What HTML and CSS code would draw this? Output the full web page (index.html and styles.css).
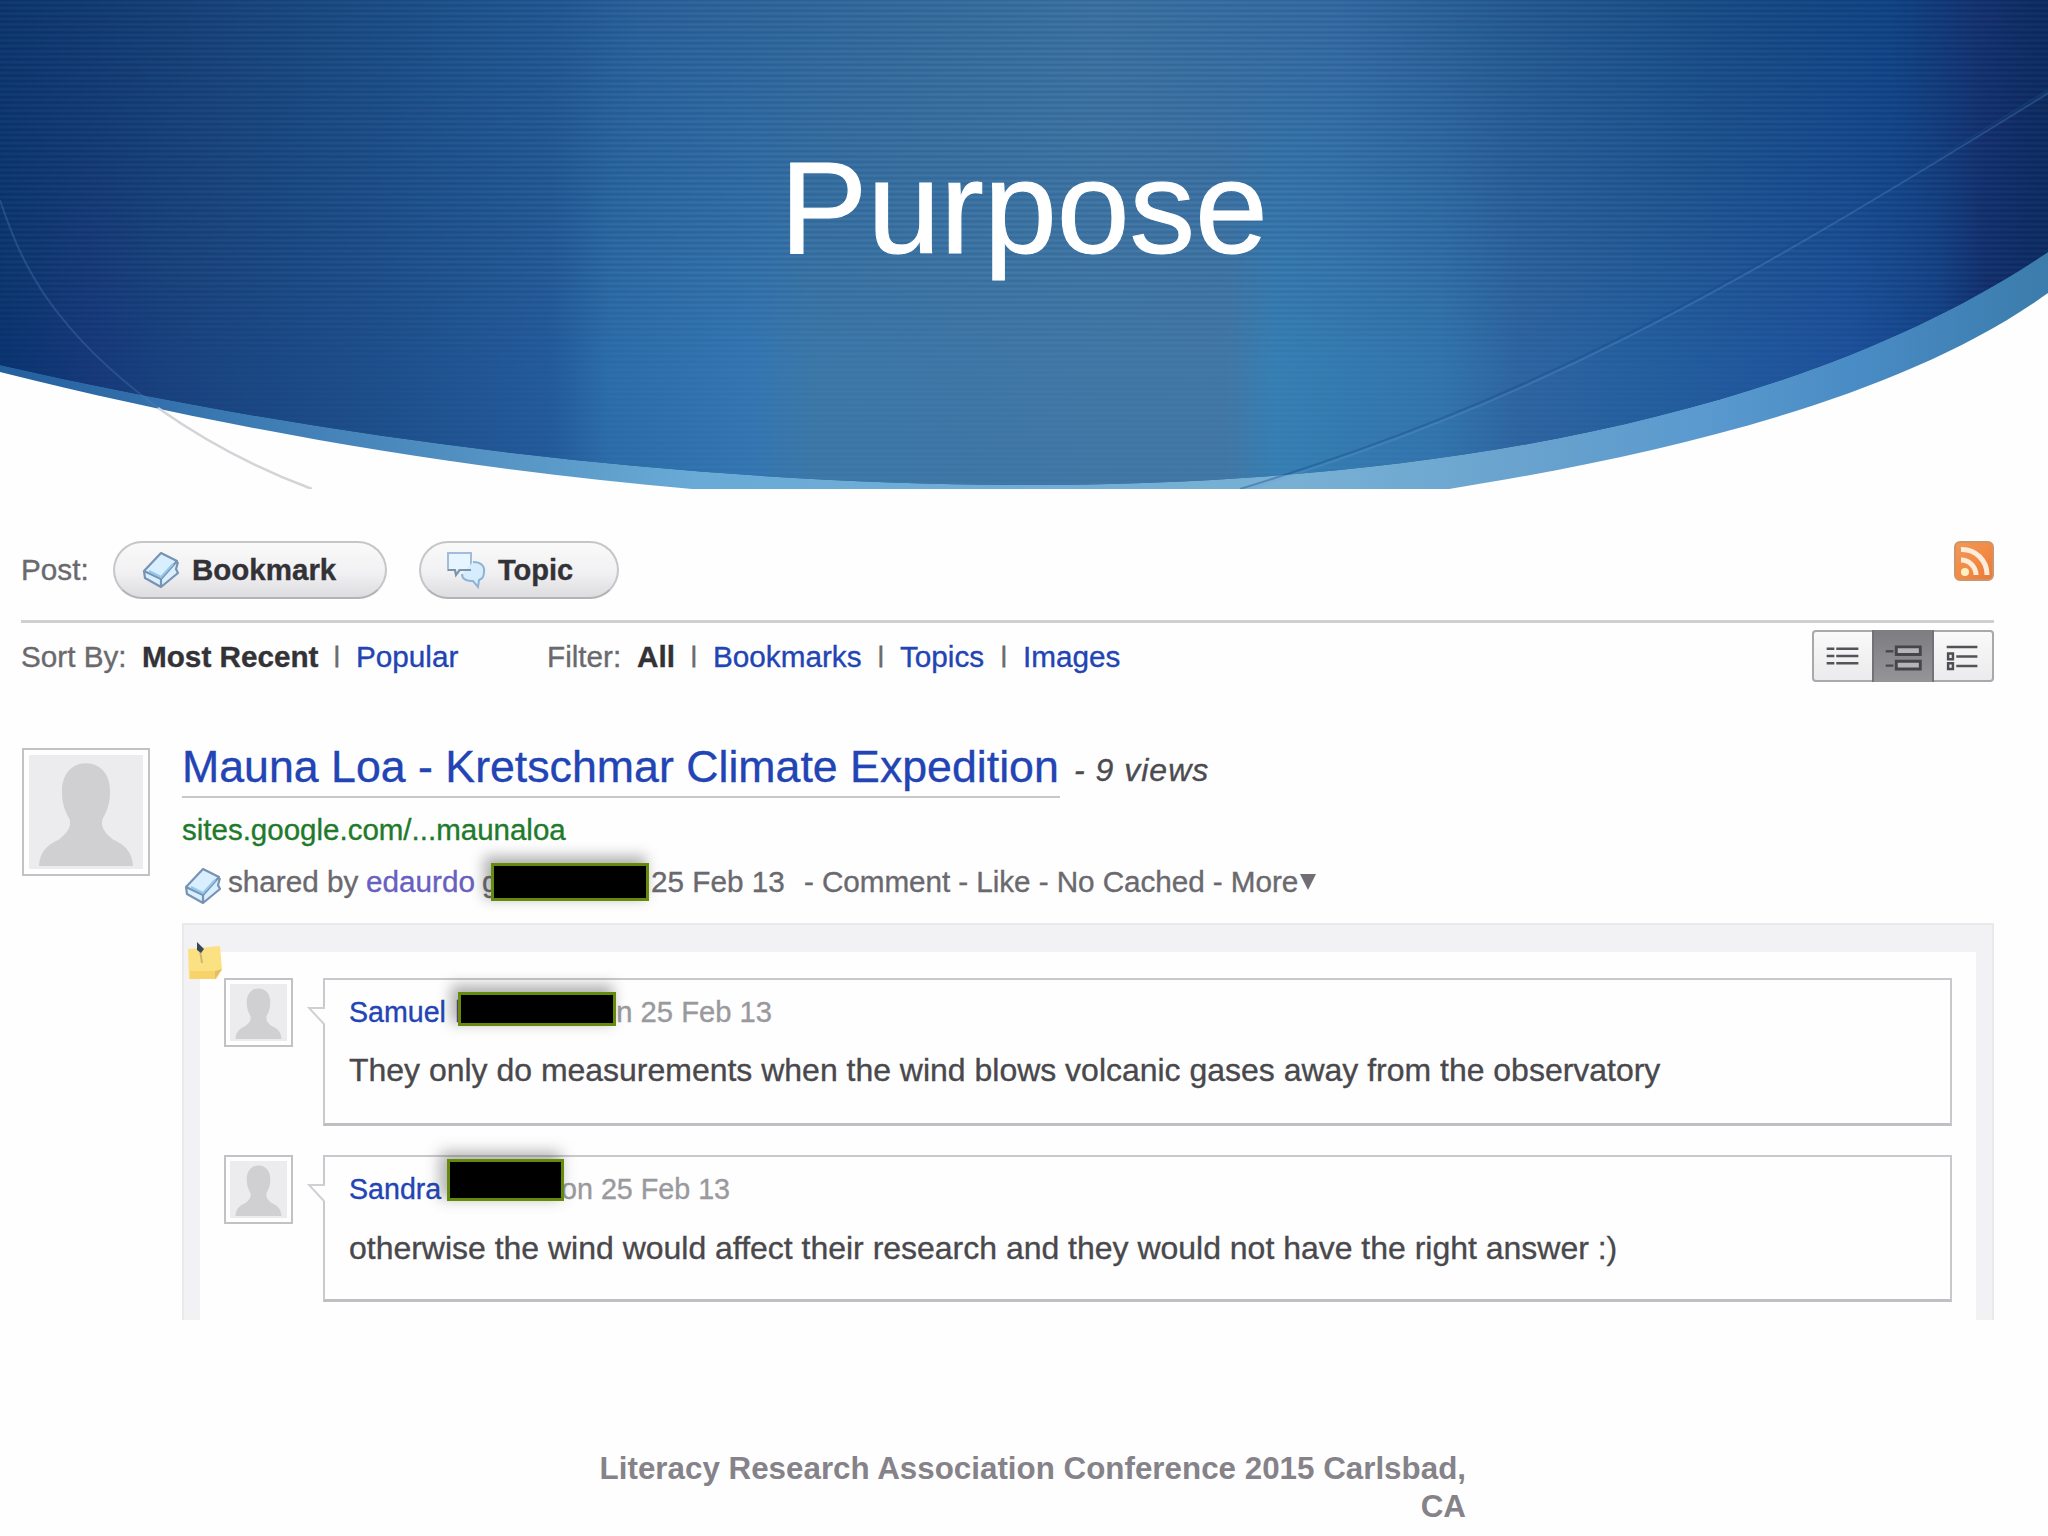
FILE: index.html
```html
<!DOCTYPE html>
<html lang="en">
<head>
<meta charset="utf-8">
<title>Purpose</title>
<link rel="stylesheet" href="styles.css">
</head>
<body>
<svg class="defs" width="0" height="0">
  <symbol id="person" viewBox="0 0 100 100" preserveAspectRatio="none">
    <path d="M50 3C66 3 76 15 75 31C75 42 71 50 67 56C65 64 70 69 78 75C90 80 98 86 99 100H1C2 86 10 80 22 75C30 69 35 64 33 56C29 50 25 42 25 31C24 15 34 3 50 3Z" fill="#d0cfd1"/>
  </symbol>
  <symbol id="book" viewBox="0 0 38 38">
    <path d="M2 20L20 2L36 10L35 17L36 22L19 36L2 27Z" fill="#d9efff"/>
    <path d="M2 20L19 2L35 10L19 28ZM2 20L3 27L19 36L36 22L34 18L36 11M19 28V35" fill="none" stroke="#7793b3" stroke-width="2.2" stroke-linejoin="round"/>
    <path d="M7 20L19 26L31 13" fill="none" stroke="#94c7ec" stroke-width="2"/>
  </symbol>
</svg>
<div class="slide">
  <header class="hero">
    <svg class="mask" width="0" height="0"><clipPath id="dome"><path d="M0 0H2048V252C1830 400 1480 485 1024 485C690 484 330 440 0 365Z"/></clipPath>
    <clipPath id="rim"><path d="M0 0H2048V293C1900 400 1660 455 1449 489H692C470 470 240 432 0 372Z"/></clipPath></svg>
    <div class="rim"></div>
    <div class="dome"><div class="low"></div><div class="stripes"></div></div>
    <svg class="arcs" viewBox="0 0 2048 489" fill="none">
      <path d="M0 200C15 245 28 270 46 297C75 338 108 370 158 408" stroke="#5b86bd" stroke-opacity=".3" stroke-width="2"/>
      <path d="M158 408C205 441 255 468 312 489" stroke="#d4d3d8" stroke-width="2.5"/>
      <path d="M1240 489C1530 400 1710 300 2048 90" stroke="#174c86" stroke-opacity=".4" stroke-width="2"/>
      <path d="M1242 491C1532 402 1712 302 2050 92" stroke="#6aa0d6" stroke-opacity=".25" stroke-width="2"/>
    </svg>
    <h1>Purpose</h1>
  </header>
  <main>
    <div class="post">
      <span class="label">Post:</span>
      <div class="pill bookmark"><svg class="ic"><use href="#book"/></svg><b>Bookmark</b></div>
      <div class="pill topic"><svg class="ic" viewBox="0 0 40 40"><path d="M2 3H25V20H13L10 25L9 20H2Z" fill="#e6f5ff" stroke="#a3bdd8" stroke-width="2"/><path d="M27 12C35 12 39 16 38 22C38 27 36 29 33 30L32 37L27 31C19 31 16 28 16 24" fill="#d5edfc" stroke="#8fb3d5" stroke-width="2"/><path d="M2 20H9L10 25L14 20H25" fill="none" stroke="#7d93ab" stroke-width="2"/></svg><b>Topic</b></div>
      <svg class="rss" viewBox="0 0 40 40"><defs><linearGradient id="o" x1="0" y1="0" x2="1" y2="1"><stop offset="0" stop-color="#ee9a5a"/><stop offset=".5" stop-color="#f28b45"/><stop offset="1" stop-color="#e8793a"/></linearGradient></defs><rect x="1" y="1" width="38" height="38" rx="5" fill="url(#o)" stroke="#cf9468" stroke-width="2"/><circle cx="11" cy="31" r="4" fill="#fff0c4"/><path d="M7 19A15 15 0 0 1 22 34M7 8.500A25 25 0 0 1 33 34" fill="none" stroke="#fdebdc" stroke-width="5"/></svg>
    </div>
    <div class="tools">
      <span class="w-sort">Sort By:</span><b class="w-recent">Most Recent</b><i class="bar">|</i><a class="w-pop">Popular</a><span class="w-filter">Filter:</span><b class="w-all">All</b><i class="bar">|</i><a class="w-books">Bookmarks</a><i class="bar">|</i><a class="w-topics">Topics</a><i class="bar">|</i><a>Images</a>
      <div class="views">
        <div><svg viewBox="0 0 60 50"><path d="M13 17.500H21M23 17.500H46M13 25H21M23 25H46M13 32.500H21M23 32.500H46" stroke="#55535a" stroke-width="2.600"/></svg></div>
        <div class="on"><svg viewBox="0 0 60 50"><path d="M12 20H20M12 35H20" stroke="#4b4a4e" stroke-width="2.500"/><path d="M23 15.500H48V23.500H23ZM23 30.500H48V38.500H23Z" fill="#b5b4b7" stroke="#464549" stroke-width="3"/></svg></div>
        <div><svg viewBox="0 0 60 50"><path d="M13 15.500H45M23 25.500H45M23 35.500H45" stroke="#55535a" stroke-width="2.600"/><path d="M14.500 22.500H19.500V28.500H14.500ZM14.500 32.500H19.500V38.500H14.500Z" fill="none" stroke="#4f4e52" stroke-width="2.600"/></svg></div>
      </div>
    </div>
    <article class="item">
      <div class="avatar"><svg><use href="#person"/></svg></div>
      <div class="body">
        <div class="title"><a>Mauna Loa - Kretschmar Climate Expedition</a><em>- 9 views</em></div>
        <div class="url">sites.google.com/...maunaloa</div>
        <div class="meta"><svg class="ic"><use href="#book"/></svg><span class="w-shared">shared by</span><a class="w-who">edaurdo</a><span class="w-g">g</span><span class="w-date">25 Feb 13</span><span class="acts">- Comment - Like - No Cached - More</span><svg class="tri" viewBox="0 0 18 18"><path d="M1 1H17L9 17Z" fill="#716f75"/></svg><div class="redact r1"></div></div>
        <section class="thread">
          <svg class="note" viewBox="0 0 36 40"><path d="M1 8L33 5L35 29L29 38L2 38Z" fill="#fbe181"/><path d="M3 30H33L29 38H3Z" fill="#f7d36c"/><path d="M35 28L28 30V38Z" fill="#e5bd62"/><path d="M13 9L15 22" stroke="#c8b87c" stroke-width="2"/><path d="M10 1L17 8L14 12L10 9Z" fill="#38465a"/></svg>
          <div class="comment">
            <div class="avatar"><svg><use href="#person"/></svg></div>
            <div class="bubble">
              <svg class="tail" viewBox="0 0 18 18"><path d="M1 1H18V17Z" fill="#fefefe"/><path d="M18 1H2L17 17" fill="none" stroke="#d0cfd3" stroke-width="2"/></svg>
              <div class="by"><a class="w-sam">Samuel</a><span class="w-l">l</span><span class="when">on 25 Feb 13</span><div class="redact r2"></div></div>
              <p>They only do measurements when the wind blows volcanic gases away from the observatory</p>
            </div>
          </div>
          <div class="comment">
            <div class="avatar"><svg><use href="#person"/></svg></div>
            <div class="bubble">
              <svg class="tail" viewBox="0 0 18 18"><path d="M1 1H18V17Z" fill="#fefefe"/><path d="M18 1H2L17 17" fill="none" stroke="#d0cfd3" stroke-width="2"/></svg>
              <div class="by"><a class="w-san">Sandra</a><span class="when">on 25 Feb 13</span><div class="redact r3"></div></div>
              <p>otherwise the wind would affect their research and they would not have the right answer :)</p>
            </div>
          </div>
        </section>
      </div>
    </article>
  </main>
  <footer>Literacy Research Association Conference 2015 Carlsbad,<br>CA</footer>
</div>
</body>
</html>
```
FILE: styles.css
```css
* { box-sizing: border-box; }
body { margin: 0; background: #fefefe; font-family: "Liberation Sans", Arial, sans-serif; }
svg { display: block; flex: none; }
.defs, .mask { position: absolute; }
.slide { width: 2048px; height: 1536px; overflow: hidden; background: #fefefe; }

.hero { position: relative; height: 489px; }
.rim, .dome, .low, .stripes, .arcs { position: absolute; inset: 0; }
.arcs { width: 2048px; height: 489px; }
.rim {
  clip-path: url(#rim);
  background: linear-gradient(90deg, #245f9e 0, #3c7ab3 240px, #5796c5 520px, #69abd6 700px, #78b0d4 1300px, #67a1cd 1550px, #5a9acf 1700px, #498bc4 1860px, #3b7cac 2048px);
}
.dome {
  clip-path: url(#dome);
  background: linear-gradient(90deg, #0b356d 0, #143f77 180px, #184a83 340px, #205893 560px, #28619b 640px, #326c9e 900px, #3a72a3 1100px, #326aa3 1340px, #245b93 1500px, #174c86 1700px, #0e4284 1890px, #122e6c 1990px, #0a295e 2048px);
}
.low {
  background: linear-gradient(90deg, #09346f 0, #16387a 90px, #18427e 170px, #1d4f8c 380px, #235b9b 550px, #2c6eaa 610px, #3477b3 755px, #3c78a9 810px, #4278a6 1225px, #3680b5 1275px, #3275ae 1440px, #2e65a2 1520px, #245f9f 1650px, #1d519c 1850px, #144387 1940px, #102e6c 1985px, #0b2a63 2048px);
  -webkit-mask-image: linear-gradient(180deg, transparent 0, rgba(0, 0, 0, .4) 35%, #000 75%);
  mask-image: linear-gradient(180deg, transparent 0, rgba(0, 0, 0, .4) 35%, #000 75%);
}
.stripes {
  background: repeating-linear-gradient(180deg, rgba(0, 20, 60, .1) 0, rgba(255, 255, 255, .04) 2.700px, rgba(0, 20, 60, .1) 5.400px);
  -webkit-mask-image: linear-gradient(180deg, #000 55%, rgba(0, 0, 0, .3) 75%);
  mask-image: linear-gradient(180deg, #000 55%, rgba(0, 0, 0, .3) 75%);
}
h1 { position: relative; margin: 0; padding-top: 133px; text-align: center; color: #fff; font-weight: 400; font-size: 131px; line-height: 150px; -webkit-text-stroke: 1px #fff; }

main { padding: 52px 54px 0 21px; font-size: 29.700px; line-height: 40px; color: #6a696e; white-space: nowrap; -webkit-text-stroke: .35px; }
a { color: #2244b4; }
b { color: #333236; }
.ic { width: 38px; height: 38px; }

.post { display: flex; align-items: flex-start; height: 79px; }
.label { width: 92px; padding-top: 9px; }
.pill { display: flex; align-items: center; height: 58px; border: 2px solid #c6c5c8; border-bottom-color: #b3b2b5; border-radius: 29px; background: linear-gradient(#fafafa, #f1f0f2 55%, #dddcde); }
.bookmark { width: 274px; margin-right: 32px; padding-left: 27px; font-size: 29.500px; }
.bookmark .ic { margin-right: 12px; }
.topic { width: 200px; padding-left: 25px; font-size: 29px; }
.topic .ic { width: 40px; height: 40px; margin-right: 12px; }
.rss { width: 40px; height: 40px; margin-left: auto; }

.tools { display: flex; height: 128px; border-top: 3px solid #d0cfd1; padding-top: 7px; }
.tools > span, .tools > b, .tools > a { padding-top: 7px; flex: none; }
.bar { width: 22px; flex: none; padding-top: 5px; font-style: normal; font-size: 22px; color: #6a696e; -webkit-text-stroke: 1px; }
.w-sort { width: 121px; }
.w-recent { width: 192px; }
.w-pop { width: 191px; }
.w-filter { width: 90px; }
.w-all { width: 54px; }
.w-books { width: 165px; }
.w-topics { width: 101px; }
.views { display: flex; width: 182px; height: 52px; margin-left: auto; border: 2px solid #a9a8ab; border-radius: 4px; background: linear-gradient(#fafafa, #ebeaec); }
.views div { flex: 1; }
.views svg { width: 100%; height: 48px; }
.views .on { margin: -2px 0; padding: 2px 0; background: linear-gradient(#7d7c80, #959497); border: solid #737276; border-width: 0 2px; }

.item { display: flex; }
.avatar { flex: none; width: 128px; height: 128px; padding: 5px; border: 2px solid #c2c1c4; background: #ecebed; background-clip: content-box; }
.item > .avatar { margin-left: 1px; }
.avatar svg { width: 100%; height: 100%; padding: 5px 9px 3px; }
.body { width: 1812px; margin-left: 32px; }
.title { display: flex; height: 50px; font-size: 44.700px; }
.title a { width: 878px; margin-right: 14px; border-bottom: 2px solid #c4c8ca; margin-top: -6px; height: 56px; line-height: 50px; }
.title em { font-size: 32px; line-height: 44px; color: #4c4b50; letter-spacing: 1px; }
.url { margin-top: 12px; color: #1f7a2b; font-size: 29.500px; }
.meta { position: relative; display: flex; height: 40px; margin-top: 12px; }
.meta .ic { margin: 5px 6px 0 2px; }
.meta a { color: #695fc0; }
.w-shared { width: 138px; flex: none; }
.w-who { width: 116px; flex: none; }
.w-g { width: 169px; flex: none; }
.w-date { width: 153px; flex: none; }
.acts { letter-spacing: -.07px; }
.tri { width: 18px; height: 18px; margin: 11px 0 0 1px; }
.redact { position: absolute; background: #000; border: 3px solid #668a0c; box-shadow: -5px -5px 14px 2px rgba(60, 60, 60, .4); }
.r1 { left: 309px; top: 1px; width: 158px; height: 38px; }

.thread { position: relative; height: 397px; margin-top: 21px; padding: 26px 24px 0; border: solid #f2f1f4; border-width: 29px 18px 0; }
.thread::before { content: ""; position: absolute; inset: -29px -18px 0; border: solid #e9e8eb; border-width: 2px 2px 0; }
.note { position: absolute; left: -13px; top: -11px; width: 36px; height: 40px; }
.comment { display: flex; height: 177px; }
.comment .avatar { width: 69px; height: 69px; padding: 4px; }
.comment .avatar svg { padding: 3px 5px 2px; }
.bubble { position: relative; width: 1629px; height: 148px; margin-left: 30px; padding: 12px 24px; border: 2px solid #c9c8cc; border-bottom-width: 3px; border-bottom-color: #bfbec2; background: #fefefe; }
.comment + .comment .bubble { height: 147px; }
.tail { position: absolute; left: -18px; top: 27px; width: 18px; height: 18px; }
.by { position: relative; display: flex; color: #9a999d; }
.by a { font-size: 28.600px; }
.w-sam { width: 106px; }
.w-l { width: 145px; color: #2443ad; }
.w-san { width: 212px; }
.when { font-size: 29.200px; }
.w-san + .when { font-size: 28.700px; }
.r2 { left: 109px; top: 0; width: 158px; height: 34px; }
.r3 { left: 98px; top: -10px; width: 117px; height: 42px; }
.bubble p { margin: 18px 0 0; font-size: 31.970px; color: #49484c; }
.comment + .comment p { margin-top: 19px; }

footer { width: 1466px; margin-top: 130px; text-align: right; font-weight: 700; font-size: 31.350px; line-height: 38px; color: #858389; }
```
